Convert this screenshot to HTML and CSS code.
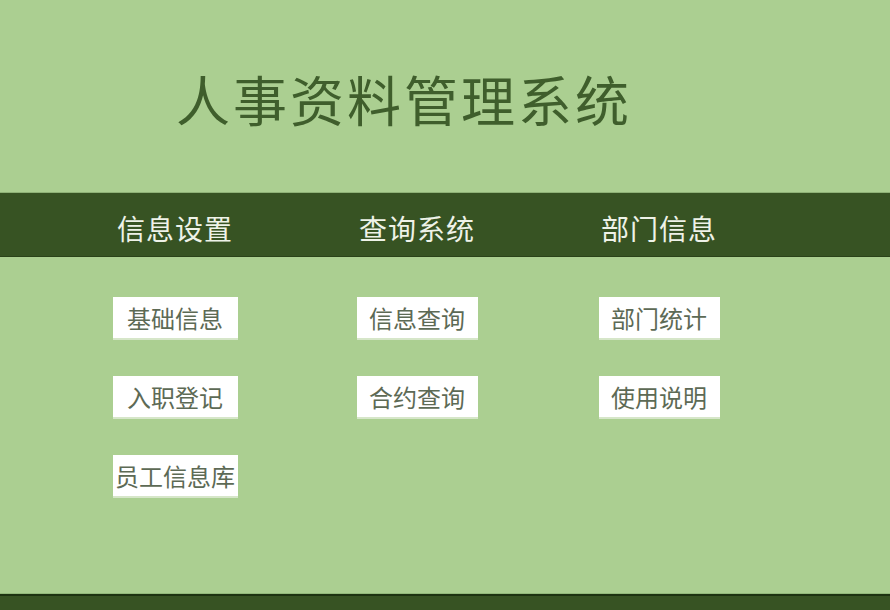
FILE: index.html
```html
<!DOCTYPE html>
<html lang="zh-CN">
<head>
<meta charset="utf-8">
<title>人事资料管理系统</title>
<link rel="stylesheet" href="styles.css">
</head>
<body>
<header class="header">
  <h1 class="title">人事资料管理系统</h1>
</header>
<nav class="nav">
  <div class="nav-item">信息设置</div>
  <div class="nav-item">查询系统</div>
  <div class="nav-item">部门信息</div>
</nav>
<main class="content">
  <div class="col">
    <a class="btn btn-wide">基础信息</a>
    <a class="btn btn-wide">入职登记</a>
    <a class="btn btn-wide">员工信息库</a>
  </div>
  <div class="col">
    <a class="btn">信息查询</a>
    <a class="btn">合约查询</a>
  </div>
  <div class="col">
    <a class="btn">部门统计</a>
    <a class="btn">使用说明</a>
  </div>
</main>
<footer class="footer"></footer>
</body>
</html>
```
FILE: styles.css
```css
html, body {
  margin: 0;
  padding: 0;
}
body {
  background: #abcf91;
  font-family: "Noto Sans CJK SC", "Noto Sans", sans-serif;
  width: 890px;
  height: 610px;
  overflow: hidden;
}
.header {
  height: 193px;
  box-sizing: border-box;
  padding: 69px 0 0 176px;
  border-bottom: 1px solid #8fb277;
}
.title {
  margin: 0;
  font-size: 54px;
  line-height: 60px;
  font-weight: normal;
  letter-spacing: 3px;
  color: #3f5e2c;
}
.nav {
  height: 64px;
  box-sizing: border-box;
  background: #375323;
  border-bottom: 1px solid #2a4219;
  display: grid;
  grid-template-columns: repeat(3, 242px);
  padding-left: 54px;
  align-items: center;
}
.nav-item {
  text-align: center;
  color: #eef2e8;
  font-size: 28px;
  line-height: 1;
  letter-spacing: 1px;
  padding-top: 6px;
}
.content {
  height: 337px;
  box-sizing: border-box;
  padding: 40px 0 0 54px;
  display: grid;
  grid-template-columns: repeat(3, 242px);
  align-items: start;
}
.col {
  display: flex;
  flex-direction: column;
  align-items: center;
  gap: 36px;
}
.btn {
  display: flex;
  align-items: center;
  justify-content: center;
  width: 121px;
  height: 43px;
  background: #ffffff;
  border-bottom: 2px solid #d6e6c9;
  box-sizing: border-box;
  color: #5d6a55;
  font-size: 24px;
  line-height: 1;
  white-space: nowrap;
  overflow: hidden;
}
.btn-wide {
  width: 125px;
}
.footer {
  height: 16px;
  background: #375323;
  border-top: 2px solid #1d3311;
  box-shadow: 0 -1px 0 #93b97b;
}
```
